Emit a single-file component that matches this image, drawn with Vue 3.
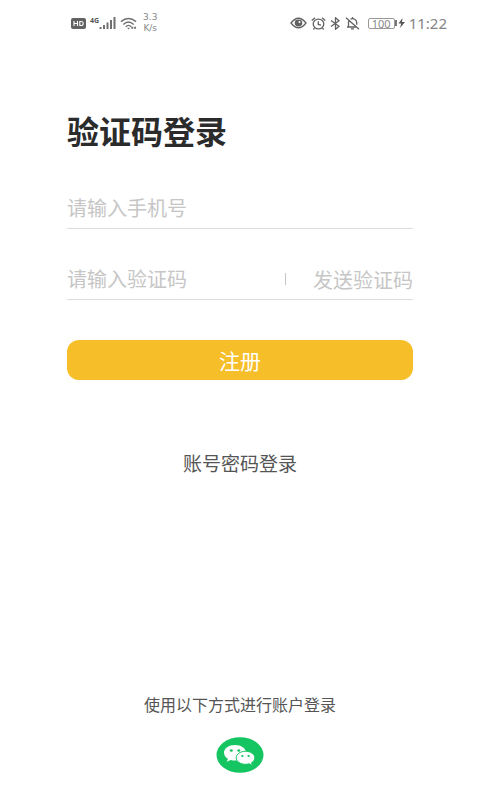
<script setup>
import { ref } from 'vue'

const phone = ref('')
const code = ref('')
</script>

<template>
  <div class="page">
    <header class="status">
      <div class="status-group">
        <svg class="hd" viewBox="0 0 15 11" width="15" height="11" aria-hidden="true">
          <rect width="15" height="11" rx="2" fill="#626262" />
          <path d="M3 3v5M6.500 3v5M3 5.500h3.500M8.800 3.500v4h1.700q1.700 0 1.700-2t-1.700-2z" fill="none" stroke="#fff" stroke-width="1.100" />
        </svg>
        <div class="signal">
          <span class="net">4G</span>
          <svg viewBox="0 0 17 12" width="17" height="12" aria-hidden="true">
            <path d="M1.500 10v2M5 8v4M8.500 5.500V12M12 3v9M15.500 0v12" stroke="#707070" stroke-width="2" />
          </svg>
        </div>
        <svg class="wifi" viewBox="0 0 18 13" width="17" height="13" aria-hidden="true">
          <g fill="none" stroke="#707070" stroke-width="1.500">
            <path d="M1 4.500Q9-2 17 4.500" />
            <path d="M3.500 7.500Q9 2.500 14.500 7.500" />
            <path d="M6 10Q9 7 12 10" />
          </g>
          <path d="M7.500 11h3L9 12.800zM12 10h2v2h-2zM15 10h2v2h-2z" fill="#707070" />
        </svg>
        <div class="speed"><span>3.3</span><span>K/s</span></div>
      </div>
      <div class="status-group right">
        <svg viewBox="0 0 17 12" width="17" height="12" aria-hidden="true">
          <path d="M1 6Q8.500-3.500 16 6Q8.500 15.500 1 6z" fill="none" stroke="#626262" stroke-width="1.300" />
          <ellipse cx="8.500" cy="6" rx="3.800" ry="3.400" fill="#626262" />
          <circle cx="9.500" cy="5" r="1" fill="#fff" />
        </svg>
        <svg viewBox="0 0 15 13" width="15" height="13" aria-hidden="true">
          <g fill="none" stroke="#626262" stroke-width="1.300">
            <ellipse cx="7.500" cy="7" rx="5.300" ry="4.900" />
            <path d="M.8 3.500L4 .8M14.200 3.500L11 .8M7.300 4.200v3.200l2.700.8M3.500 11.200l-1.200 1.300M11.500 11.200l1.200 1.300" />
          </g>
        </svg>
        <svg viewBox="0 0 11 13" width="11" height="13" aria-hidden="true">
          <path d="M1 3.500l8 5.800-3.500 3V.8L9 3.700 1 9.500" fill="none" stroke="#626262" stroke-width="1.300" />
        </svg>
        <svg viewBox="0 0 15 13" width="15" height="13" aria-hidden="true">
          <path d="M1 .8l13 11.400M2 10h9.500M3.500 10V5.500Q3.500 4.200 4.300 3.300M5.500 2.300Q7.500 1 9.700 2.300T11.700 5.500v2.300M6 11.800h3M7.500 0v1.500" fill="none" stroke="#626262" stroke-width="1.300" />
        </svg>
        <div class="battery">
          <span class="charge">100</span>
          <svg viewBox="0 0 10 10" width="10" height="10" aria-hidden="true">
            <path d="M0 2h2v6H0z" fill="#777" />
            <path d="M7.500 0L3.500 5.600h2.700L5 10l5-6H7z" fill="#555" />
          </svg>
        </div>
        <time class="clock">11:22</time>
      </div>
    </header>

    <main class="content">
      <h1>验证码登录</h1>
      <form class="form" @submit.prevent>
        <div class="field">
          <input v-model="phone" type="tel" placeholder="请输入手机号" aria-label="请输入手机号" />
        </div>
        <div class="field">
          <input v-model="code" type="text" inputmode="numeric" placeholder="请输入验证码" aria-label="请输入验证码" />
          <button class="send" type="button"><i class="divider"></i>发送验证码</button>
        </div>
        <button class="submit" type="submit">注册</button>
      </form>
      <a class="password" href="#">账号密码登录</a>
    </main>

    <footer class="other">
      <p>使用以下方式进行账户登录</p>
      <button class="wechat" type="button" aria-label="微信">
        <svg viewBox="0 0 48 36" width="48" height="36" aria-hidden="true">
          <ellipse cx="24" cy="18" rx="23.500" ry="17.800" fill="#15c562" />
          <path d="M19 8C12.800 8 8 11.300 8 15.700c0 2.500 1.500 4.700 4 6.100l-1.200 3 4-1.900c1.300.4 2.700.6 4.200.6 6.200 0 11-3.400 11-7.800S25.200 8 19 8z" fill="#fff" />
          <path d="M29.500 14.300c-5.200 0-9.300 2.900-9.300 6.500s4.100 6.500 9.300 6.500c1.300 0 2.500-.2 3.600-.5l3.400 1.600-1-2.700c2-1.200 3.300-2.900 3.300-4.900 0-3.600-4.100-6.500-9.300-6.500z" fill="#fff" stroke="#15c562" stroke-width="1" />
          <g fill="#15c562">
            <ellipse cx="15.300" cy="13.500" rx="1.500" ry="1.200" />
            <ellipse cx="22.800" cy="13.500" rx="1.500" ry="1.200" />
            <ellipse cx="26.400" cy="19" rx="1.200" ry="1" />
            <ellipse cx="32.600" cy="19" rx="1.200" ry="1" />
          </g>
        </svg>
      </button>
    </footer>
  </div>
</template>

<style>
body {
  margin: 0;
  background: #fff;
}
</style>

<style scoped>
.page {
  box-sizing: border-box;
  display: flex;
  flex-direction: column;
  min-height: 100vh;
  padding-bottom: 27px;
  font-family: "Noto Sans", "Noto Sans CJK SC", sans-serif;
  color: #555;
}
.status {
  display: flex;
  align-items: center;
  justify-content: space-between;
  height: 46px;
  padding: 0 33px 0 71px;
}
.status-group {
  display: flex;
  align-items: center;
  gap: 4px;
}
.signal {
  display: flex;
  align-items: center;
}
.net {
  align-self: flex-start;
  font-size: 7px;
  font-weight: 700;
  line-height: 8px;
}
.speed {
  display: flex;
  flex-direction: column;
  align-items: center;
  margin-left: 2px;
  font-family: "DejaVu Sans", sans-serif;
  font-size: 9px;
  line-height: 11px;
  color: #888;
}
.battery {
  display: flex;
  align-items: center;
  margin-left: 4px;
}
.charge {
  padding: 0 3px;
  border: 1px solid #999;
  border-radius: 2px;
  font-size: 11px;
  line-height: 9px;
  color: #888;
}
.clock {
  font-size: 15px;
  line-height: 20px;
  color: #858585;
}
.content {
  display: flex;
  flex-direction: column;
  padding: 62px 67px 0;
}
h1 {
  margin: 0;
  font-size: 32px;
  font-weight: 700;
  line-height: 48px;
  color: #2b2b2b;
}
.form {
  display: flex;
  flex-direction: column;
}
.field {
  box-sizing: border-box;
  display: flex;
  align-items: flex-end;
  height: 71px;
  padding-bottom: 4px;
  border-bottom: 1px solid #dedede;
}
.field:first-child {
  height: 73px;
}
button,
input {
  padding: 0;
  border: 0;
  background: none;
  font: inherit;
}
input {
  flex: 1;
  min-width: 0;
  height: 32px;
  font-size: 20px;
  color: #333;
  outline: none;
}
input::placeholder {
  color: #c6c6c6;
  opacity: 1;
}
.send {
  display: flex;
  align-items: center;
  gap: 27px;
  height: 32px;
  font-size: 20px;
  color: #c6c6c6;
}
.divider {
  width: 1px;
  height: 12px;
  background: #c6c6c6;
}
.submit {
  height: 40px;
  margin-top: 40px;
  padding-top: 2px;
  border-radius: 12px;
  background: #f6be28;
  font-size: 21px;
  line-height: 38px;
  color: #fff;
}
.password {
  align-self: center;
  margin-top: 70px;
  font-size: 19px;
  line-height: 28px;
  color: #555;
  text-decoration: none;
}
.other {
  display: flex;
  flex-direction: column;
  align-items: center;
  gap: 20px;
  margin-top: auto;
}
.other p {
  margin: 0;
  font-size: 16px;
  line-height: 24px;
}
.wechat,
.wechat svg {
  display: block;
}
</style>
